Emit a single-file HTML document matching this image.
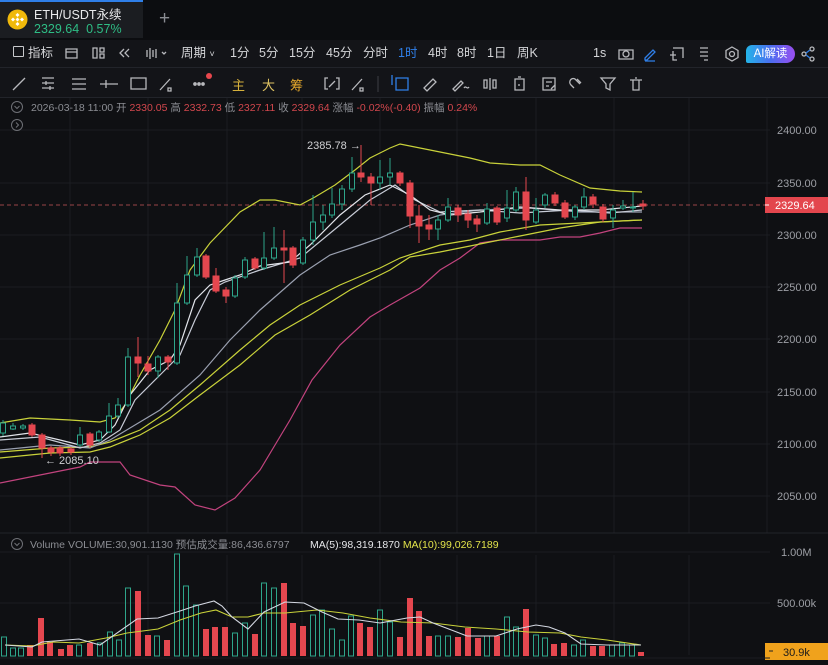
<!DOCTYPE html>
<html><head><meta charset="utf-8"><style>
*{margin:0;padding:0;box-sizing:border-box}
body{width:828px;height:665px;overflow:hidden;background:#0f1013;font-family:"Liberation Sans","Noto Sans CJK SC",sans-serif;position:relative;color:#d8d9dc}
.a{position:absolute;white-space:nowrap}
</style></head><body>
<!-- top tab bar -->
<div class="a" style="left:0;top:0;width:828px;height:40px;background:#0c0d10"></div>
<div class="a" style="left:0;top:0;width:143px;height:38px;background:#1b1d21;border-top:2px solid #2f7fe8"></div>
<svg class="a" style="left:7px;top:9px" width="21" height="21" viewBox="0 0 21 21"><circle cx="10.5" cy="10.5" r="10" fill="#f0b90b"/><path d="M10.5 4l2 2-2 2-2-2zM6 8.5l2 2-2 2-2-2zM15 8.5l2 2-2 2-2-2zM10.5 8.5l2 2-2 2-2-2zM10.5 13l2 2-2 2-2-2z" fill="#fff"/></svg>
<div class="a" style="left:34px;top:4px;font-size:12.5px;color:#e8e9eb">ETH/USDT永续</div>
<div class="a" style="left:34px;top:22px;font-size:12.5px;color:#2ebd85">2329.64&nbsp; 0.57%</div>
<div class="a" style="left:159px;top:8px;font-size:19px;color:#8a8c92;font-weight:300">+</div>
<!-- toolbar rows -->
<div class="a" style="left:0;top:40px;width:828px;height:58px;background:#131418"></div>
<div class="a" style="left:0;top:67px;width:828px;height:1px;background:#22242a"></div>
<div class="a" style="left:0;top:97px;width:828px;height:1px;background:#22242a"></div>
<div class="a" style="top:45px;left:0;font-size:12.5px;color:#d4d5d8;line-height:16px">
<span class="a" style="left:13px;top:1px;width:11px;height:11px;border:1.3px solid #c8c9cc;border-radius:1px"></span>
<span class="a" style="left:28px">指标</span>
<span class="a" style="left:181px">周期 <span style="font-size:9px">˅</span></span>
<span class="a" style="left:230px">1分</span><span class="a" style="left:259px">5分</span><span class="a" style="left:289px">15分</span><span class="a" style="left:326px">45分</span><span class="a" style="left:363px">分时</span><span class="a" style="left:398px;color:#2f7fe8">1时</span><span class="a" style="left:428px">4时</span><span class="a" style="left:457px">8时</span><span class="a" style="left:487px">1日</span><span class="a" style="left:517px">周K</span><span class="a" style="left:593px">1s</span>
</div>
<svg class="a" style="left:0;top:40px" width="828" height="58" viewBox="0 40 828 58" fill="none" stroke="#b8b9bd" stroke-width="1.3">
<path d="M66 49h11v9h-11zM66 52h11"/>
<path d="M93 48h4v10h-4zM100 48h4v4h-4zM100 54h4v4h-4z"/>
<path d="M124 49l-4 4 4 4M129 49l-4 4 4 4"/>
<path d="M147 50v7M150 48v11M153 50v7M156 49v9M162 52l2 2 2-2"/>
<circle cx="626" cy="54" r="3"/><path d="M619 50h14v9h-14z"/>
<path d="M645 58l8-8 2 2-8 8h-2zM645 61h10" stroke="#2f7fe8"/>
<path d="M673 48h10v10M673 51v9h4M670 55h6" />
<path d="M700 48h8M700 52h8M700 56h8M704 60h4"/>
<circle cx="732" cy="54" r="2.5"/><path d="M732 47l6 3.5v7l-6 3.5-6-3.5v-7z"/>
<circle cx="804" cy="54" r="2"/><circle cx="812" cy="49" r="2"/><circle cx="812" cy="59" r="2"/><path d="M806 53l4-3M806 55l4 3" stroke="#2f7fe8"/>
<!-- row2 -->
<g>
<path d="M13 90l12-12"/>
<path d="M42 78h12M42 83h12M42 88h12M46 81v4M50 86v4"/>
<path d="M72 79h14M72 84h14M72 89h14"/>
<path d="M100 84h18M106 80v8"/>
<path d="M131 78h15v11h-15z"/>
<path d="M160 90l10-11M168 88h3v3h-3z"/>
<path d="M328 78h-3v11h3M336 78h3v11h-3M329 87l6-6"/>
<path d="M352 90l10-11M360 88h3v3h-3z"/>
<path d="M396 78h12v12h-12z M392 75v10" stroke="#2f7fe8"/>
<path d="M424 88l9-9 3 3-9 9-3-3z"/>
<path d="M453 89l8-8 2 2-8 8zM464 88c2-3 3 2 5-1"/>
<path d="M484 80v8h3v-8zM490 78v12M493 80v8h3v-8z"/>
<path d="M515 79h9v11h-9zM518 77h3M519 84v2"/>
<path d="M543 78h12v12h-12zM546 82h6M546 86h3M551 89l4-4"/>
<path d="M574 88l-3-3c-3-3 0-8 4-6l5 5M577 79l4 4"/>
<path d="M601 78h14l-5 6v6l-4-2v-4z"/>
<path d="M630 80h12M633 80v10h6v-10M635 78h2"/>
</g>
<circle cx="195" cy="84" r="1.2" fill="#b8b9bd"/><circle cx="199" cy="84" r="1.2" fill="#b8b9bd"/><circle cx="203" cy="84" r="1.2" fill="#b8b9bd"/>
<circle cx="209" cy="76" r="3" fill="#e8474d" stroke="none"/>
<path d="M378 76v16" stroke="#33353b"/>
</svg>
<div class="a" style="left:232px;top:75px;font-size:13px;color:#d6b13c">主</div>
<div class="a" style="left:262px;top:75px;font-size:13px;color:#e0c463">大</div>
<div class="a" style="left:290px;top:75px;font-size:13px;color:#e6a92c">筹</div>
<div class="a" style="left:746px;top:45px;width:49px;height:18px;border-radius:6px 9px 9px 2px;background:linear-gradient(90deg,#24b4e8,#4b6ef0,#9a4ef0);font-size:11.5px;color:#fff;text-align:center;line-height:18px">AI解读</div>

<!-- chart -->
<svg class="a" style="left:0;top:98px" width="828" height="567" viewBox="0 98 828 567">
<rect x="0" y="98" width="828" height="567" fill="#0f1013"/>
<g stroke="#1b1d21" stroke-width="1">
<path d="M0 130h770M0 183h770M0 235h770M0 287h770M0 339h770M0 392h770M0 444h770M0 496h770M0 552h770M0 603h770"/>
<path d="M70 98v435M148 98v435M227 98v435M302 98v435M380 98v435M457 98v435M536 98v435M614 98v435M689 98v435M767 98v435M70 555v100M148 555v100M227 555v100M302 555v100M380 555v100M457 555v100M536 555v100M614 555v100M689 555v100"/>
</g>
<path d="M0 533h828" stroke="#22242a"/>
<g font-size="11" fill="#9d9fa5">
<text x="777" y="134">2400.00</text><text x="777" y="187">2350.00</text><text x="777" y="239">2300.00</text><text x="777" y="291">2250.00</text><text x="777" y="343">2200.00</text><text x="777" y="396">2150.00</text><text x="777" y="448">2100.00</text><text x="777" y="500">2050.00</text>
<text x="781" y="556">1.00M</text><text x="777" y="607">500.00k</text>
</g>
<!-- info line -->
<circle cx="17" cy="107" r="5.5" fill="none" stroke="#6e7076"/><path d="M14.5 106l2.5 2.5 2.5-2.5" stroke="#6e7076" fill="none"/>
<circle cx="17" cy="125" r="5.5" fill="none" stroke="#6e7076"/><path d="M16 122.5l2.5 2.5-2.5 2.5" stroke="#6e7076" fill="none"/>
<text y="111" font-size="10.5" fill="#8b8d93"><tspan x="31">2026-03-18 11:00 开 </tspan><tspan fill="#d2474d">2330.05</tspan><tspan> 高 </tspan><tspan fill="#d2474d">2332.73</tspan><tspan> 低 </tspan><tspan fill="#d2474d">2327.11</tspan><tspan> 收 </tspan><tspan fill="#d2474d">2329.64</tspan><tspan> 涨幅 </tspan><tspan fill="#d2474d">-0.02%(-0.40)</tspan><tspan> 振幅 </tspan><tspan fill="#d2474d">0.24%</tspan></text>
<!-- current price line -->
<path d="M0 205h765" stroke="#c8545a" stroke-dasharray="4 3" stroke-width="0.8"/>
<rect x="765" y="197" width="63" height="16" fill="#e3464d"/><path d="M765 205h4" stroke="#fff"/>
<text x="775" y="209" font-size="11" fill="#fff">2329.64</text>
<!-- lines -->
<g fill="none" stroke-width="1.2">
<polyline stroke="#c9d23a" points="0,423 30,418 70,420 100,422 115,418 125,405 140,375 160,340 175,310 190,270 210,243 240,212 260,200 275,200 300,205 315,197 335,185 355,170 370,158 390,148 400,144 430,150 470,158 490,163 520,165 540,165 560,175 590,188 620,191 642,192"/>
<polyline stroke="#c2437e" points="0,483 40,475 80,467 90,462 120,462 130,475 160,485 175,487 195,505 215,510 235,498 260,470 290,420 312,380 340,345 370,317 390,305 420,288 440,270 460,258 480,243 500,240 540,240 560,237 580,237 600,233 620,228 642,228"/>
<polyline stroke="#c9d23a" points="0,452 50,448 90,447 110,442 140,430 170,410 200,385 240,350 270,325 300,305 340,285 380,268 400,258 440,245 470,240 500,232 540,225 600,222 642,220"/>
<polyline stroke="#c9d23a" points="0,458 50,453 90,452 110,447 140,435 170,418 200,395 240,365 275,335 310,315 350,290 390,270 410,257 440,252 480,244 520,236 560,228 600,222 642,220"/>
<polyline stroke="#9aa0b0" points="0,450 50,445 90,448 110,440 130,428 160,410 200,375 230,340 260,310 300,275 330,255 360,245 380,238 410,225 440,215 480,210 530,208 580,212 642,212"/>
<polyline stroke="#c7cbd6" points="0,440 40,437 80,448 100,443 120,430 135,400 160,375 180,355 195,320 210,290 225,282 260,270 300,258 340,225 370,200 395,185 415,200 440,212 480,210 520,213 570,210 610,213 642,210"/>
<polyline stroke="#e2e4ea" points="0,437 30,433 60,440 80,445 100,440 115,425 130,395 150,370 170,360 180,345 195,300 210,285 225,280 240,275 260,266 290,262 310,245 340,215 365,195 390,185 410,195 430,210 450,215 480,212 520,207 560,210 600,210 642,206"/>
</g>
<!-- candles -->
<g id="c"></g>
<g stroke-width="1">
<g stroke="#2ea58a" fill="#0f1013">
<path d="M3 420v16M13 423v7M23 424v6M80 427v20M99 430v12M109 403v30M118 398v20M128 348v59M158 355v23M177 283v82M187 256v49M197 248v29M235 275v23M245 257v22M264 232v38M274 227v33M303 237v28M313 195v50M323 205v25M332 188v30M342 185v25M352 157v35M380 160v30M390 158v27M438 215v25M448 198v24M487 203v22M507 190v32M516 187v25M536 198v26M545 193v15M575 205v15M584 188v22M613 205v23M623 200v10M633 192v20"/>
<rect x="0.5" y="423" width="5" height="10"/><rect x="10.5" y="426" width="5" height="3"/><rect x="20.5" y="426" width="5" height="2"/><rect x="77.5" y="435" width="5" height="10"/><rect x="96.5" y="432" width="5" height="8"/><rect x="106.5" y="416" width="5" height="16"/><rect x="115.5" y="405" width="5" height="11"/><rect x="125.5" y="357" width="5" height="48"/><rect x="155.5" y="357" width="5" height="14"/><rect x="174.5" y="303" width="5" height="60"/><rect x="184.5" y="275" width="5" height="28"/><rect x="194.5" y="257" width="5" height="18"/><rect x="232.5" y="278" width="5" height="18"/><rect x="242.5" y="260" width="5" height="17"/><rect x="261.5" y="258" width="5" height="10"/><rect x="271.5" y="248" width="5" height="10"/><rect x="300.5" y="240" width="5" height="23"/><rect x="310.5" y="222" width="5" height="18"/><rect x="320.5" y="215" width="5" height="7"/><rect x="329.5" y="204" width="5" height="11"/><rect x="339.5" y="189" width="5" height="15"/><rect x="349.5" y="173" width="5" height="16"/><rect x="377.5" y="177" width="5" height="6"/><rect x="387.5" y="173" width="5" height="4"/><rect x="435.5" y="220" width="5" height="9"/><rect x="445.5" y="207" width="5" height="13"/><rect x="484.5" y="209" width="5" height="14"/><rect x="504.5" y="208" width="5" height="10"/><rect x="513.5" y="192" width="5" height="18"/><rect x="533.5" y="210" width="5" height="12"/><rect x="542.5" y="195" width="5" height="10"/><rect x="572.5" y="207" width="5" height="10"/><rect x="581.5" y="197" width="5" height="10"/><rect x="610.5" y="210" width="5" height="8"/><rect x="620.5" y="206" width="5" height="2"/><rect x="630.5" y="207" width="5" height="1"/>
</g>
<g stroke="#e5474f" fill="#e5474f">
<path d="M32 423v14M42 433v25M51 446v10M60 446v10M71 447v8M90 432v16M138 337v40M148 356v19M168 355v15M206 254v25M216 268v25M226 287v16M255 257v13M284 230v53M293 246v22M361 145v37M371 173v32M400 171v15M410 180v48M419 205v38M429 215v25M458 205v17M468 210v18M477 215v17M497 206v19M526 177v53M555 192v14M565 200v19M593 194v14M603 204v18M643 200v10"/>
<rect x="29" y="425" width="6" height="10"/><rect x="39" y="435" width="6" height="13"/><rect x="48" y="448" width="6" height="4"/><rect x="57" y="448" width="6" height="5"/><rect x="68" y="449" width="6" height="3"/><rect x="87" y="434" width="6" height="11"/><rect x="135" y="357" width="6" height="6"/><rect x="145" y="364" width="6" height="7"/><rect x="165" y="357" width="6" height="5"/><rect x="203" y="256" width="6" height="21"/><rect x="213" y="276" width="6" height="15"/><rect x="223" y="290" width="6" height="6"/><rect x="252" y="259" width="6" height="9"/><rect x="281" y="248" width="6" height="2"/><rect x="290" y="248" width="6" height="17"/><rect x="358" y="173" width="6" height="4"/><rect x="368" y="177" width="6" height="6"/><rect x="397" y="173" width="6" height="10"/><rect x="407" y="183" width="6" height="33"/><rect x="416" y="216" width="6" height="10"/><rect x="426" y="225" width="6" height="4"/><rect x="455" y="208" width="6" height="7"/><rect x="465" y="214" width="6" height="6"/><rect x="474" y="219" width="6" height="5"/><rect x="494" y="208" width="6" height="14"/><rect x="523" y="192" width="6" height="28"/><rect x="552" y="195" width="6" height="8"/><rect x="562" y="203" width="6" height="14"/><rect x="590" y="197" width="6" height="7"/><rect x="600" y="207" width="6" height="12"/><rect x="640" y="204" width="6" height="2"/>
</g>
</g>
<text x="307" y="149" font-size="11" fill="#cfd0d3">2385.78 →</text>
<text x="45" y="464" font-size="11" fill="#cfd0d3">← 2085.10</text>
<!-- volume header -->
<circle cx="17" cy="544" r="5.5" fill="none" stroke="#6e7076"/><path d="M14.5 543l2.5 2.5 2.5-2.5" stroke="#6e7076" fill="none"/>
<text y="548" font-size="10.5"><tspan x="30" fill="#8b8d93">Volume  VOLUME:30,901.1130  预估成交量:86,436.6797 </tspan><tspan x="310" fill="#e6e7ea">MA(5):98,319.1870 </tspan><tspan fill="#e2e34a">MA(10):99,026.7189</tspan></text>
<!-- volume bars -->
<g stroke="#2ea58a" fill="none">
<rect x="1.5" y="637" width="5" height="19"/><rect x="10.5" y="648" width="5" height="8"/><rect x="18.5" y="648" width="5" height="8"/><rect x="76.5" y="645" width="5" height="11"/><rect x="97.5" y="643" width="5" height="13"/><rect x="107.5" y="632" width="5" height="24"/><rect x="116.5" y="640" width="5" height="16"/><rect x="125.5" y="588" width="5" height="68"/><rect x="154.5" y="636" width="5" height="20"/><rect x="174.5" y="554" width="5" height="102"/><rect x="183.5" y="586" width="5" height="70"/><rect x="193.5" y="605" width="5" height="51"/><rect x="232.5" y="633" width="5" height="23"/><rect x="242.5" y="623" width="5" height="33"/><rect x="261.5" y="583" width="5" height="73"/><rect x="271.5" y="588" width="5" height="68"/><rect x="310.5" y="615" width="5" height="41"/><rect x="319.5" y="610" width="5" height="46"/><rect x="329.5" y="629" width="5" height="27"/><rect x="339.5" y="640" width="5" height="16"/><rect x="348.5" y="616" width="5" height="40"/><rect x="377.5" y="610" width="5" height="46"/><rect x="387.5" y="622" width="5" height="34"/><rect x="435.5" y="636" width="5" height="20"/><rect x="445.5" y="636" width="5" height="20"/><rect x="484.5" y="636" width="5" height="20"/><rect x="504.5" y="617" width="5" height="39"/><rect x="513.5" y="627" width="5" height="29"/><rect x="533.5" y="635" width="5" height="21"/><rect x="542.5" y="638" width="5" height="18"/><rect x="571.5" y="645" width="5" height="11"/><rect x="580.5" y="640" width="5" height="16"/><rect x="609.5" y="645" width="5" height="11"/><rect x="619.5" y="643" width="5" height="13"/><rect x="629.5" y="645" width="5" height="11"/>
</g>
<g fill="#e5474f">
<rect x="27" y="645" width="6" height="11"/><rect x="38" y="618" width="6" height="38"/><rect x="47" y="642" width="6" height="14"/><rect x="58" y="649" width="6" height="7"/><rect x="67" y="645" width="6" height="11"/><rect x="87" y="643" width="6" height="13"/><rect x="135" y="591" width="6" height="65"/><rect x="145" y="635" width="6" height="21"/><rect x="164" y="640" width="6" height="16"/><rect x="203" y="629" width="6" height="27"/><rect x="212" y="627" width="6" height="29"/><rect x="222" y="627" width="6" height="29"/><rect x="252" y="634" width="6" height="22"/><rect x="281" y="583" width="6" height="73"/><rect x="290" y="623" width="6" height="33"/><rect x="300" y="626" width="6" height="30"/><rect x="357" y="623" width="6" height="33"/><rect x="367" y="627" width="6" height="29"/><rect x="397" y="637" width="6" height="19"/><rect x="407" y="598" width="6" height="58"/><rect x="416" y="611" width="6" height="45"/><rect x="426" y="636" width="6" height="20"/><rect x="455" y="637" width="6" height="19"/><rect x="465" y="628" width="6" height="28"/><rect x="475" y="638" width="6" height="18"/><rect x="494" y="636" width="6" height="20"/><rect x="523" y="609" width="6" height="47"/><rect x="551" y="644" width="6" height="12"/><rect x="561" y="643" width="6" height="13"/><rect x="590" y="646" width="6" height="10"/><rect x="599" y="646" width="6" height="10"/><rect x="638" y="652" width="6" height="4"/>
</g>
<g fill="none" stroke-width="1.1">
<polyline stroke="#c9d23a" points="5,645 32,646 53,642 79,643 106,638 127,633 158,629 180,620 201,613 216,610 232,617 248,617 264,613 285,613 317,610 343,613 370,618 401,622 433,623 465,627 496,629 528,632 560,633 581,637 607,640 641,645"/>
<polyline stroke="#d4d8e2" points="5,645 32,647 42,642 79,639 100,645 137,619 158,618 180,611 195,606 214,601 222,606 232,617 248,629 264,612 285,602 304,603 322,612 338,619 359,620 380,623 407,618 420,617 433,623 454,631 467,636 496,636 517,629 536,625 549,627 565,633 581,644 607,645 641,645"/>
</g>
<rect x="765" y="643" width="63" height="17" fill="#f0a21c"/><path d="M769 651h4" stroke="#222"/>
<text x="783" y="656" font-size="11" fill="#1a1a1a">30.9k</text>
<path d="M0 658h770" stroke="#1b1d21"/>
</svg>
</body></html>
